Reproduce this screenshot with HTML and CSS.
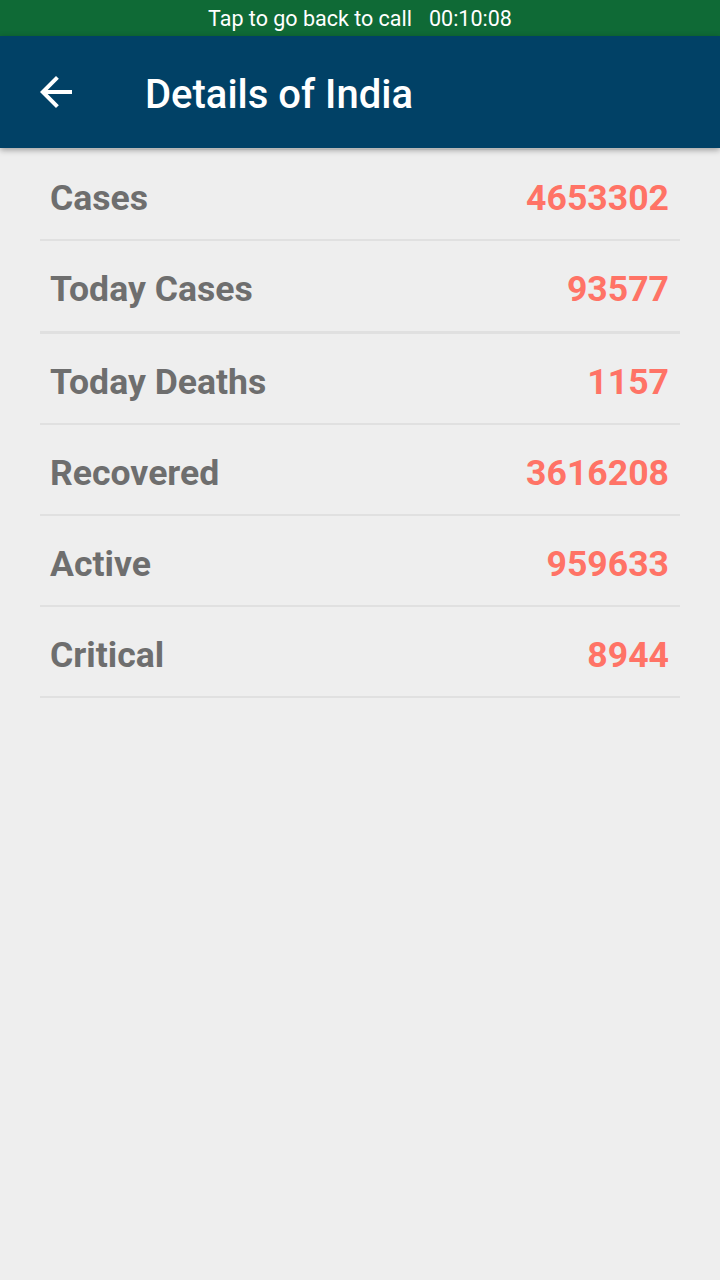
FILE: index.html
```html
<!DOCTYPE html>
<html>
<head>
<meta charset="utf-8">
<link rel="stylesheet" href="styles.css">
</head>
<body>
<div class="status">Tap to go back to call<span class="timer">00:10:08</span></div>
<header class="appbar">
  <div class="back">
    <svg width="48" height="48" viewBox="0 0 24 24"><path fill="#fff" d="M20 11H7.83l5.59-5.59L12 4l-8 8 8 8 1.41-1.41L7.83 13H20v-2z"/></svg>
  </div>
  <h1 class="title">Details of India</h1>
</header>
<main class="list">
  <div class="row"><span class="label">Cases</span><span class="value">4653302</span></div>
  <div class="row thick"><span class="label">Today Cases</span><span class="value">93577</span></div>
  <div class="row"><span class="label">Today Deaths</span><span class="value">1157</span></div>
  <div class="row"><span class="label">Recovered</span><span class="value">3616208</span></div>
  <div class="row"><span class="label">Active</span><span class="value">959633</span></div>
  <div class="row"><span class="label">Critical</span><span class="value">8944</span></div>
</main>
</body>
</html>
```
FILE: styles.css
```css
html, body {
  margin: 0;
  padding: 0;
  background: #eeeeee;
  font-family: Roboto, "Noto Sans", sans-serif;
  width: 720px;
  height: 1280px;
  overflow: hidden;
}
.status {
  height: 36px;
  background: #0f6a36;
  color: #ffffff;
  font-size: 21.5px;
  display: flex;
  align-items: center;
  justify-content: center;
  padding-top: 1px;
  box-sizing: border-box;
}
.timer {
  margin-left: 17px;
}
.appbar {
  height: 112px;
  background: #014166;
  display: flex;
  align-items: center;
  box-shadow: 0 2px 6px rgba(0, 0, 0, 0.35);
  position: relative;
  z-index: 1;
}
.back {
  width: 48px;
  height: 48px;
  margin-left: 32px;
  display: flex;
}
.title {
  margin: 5px 0 0 65px;
  color: #ffffff;
  font-size: 40px;
  font-weight: 500;
}
.list {
  margin: 1px 40px 0;
  border-top: 1px solid #e0e0e0;
}
.row {
  height: 83px;
  border-bottom: 2px solid #e0e0e0;
  display: flex;
  align-items: center;
  justify-content: space-between;
  padding: 6px 11px 0 10px;
  font-size: 35.6px;
  font-weight: 700;
}
.row.thick {
  height: 84px;
  border-bottom-width: 3px;
}
.label {
  color: #6e6e6e;
}
.value {
  color: #ff7366;
}
```
